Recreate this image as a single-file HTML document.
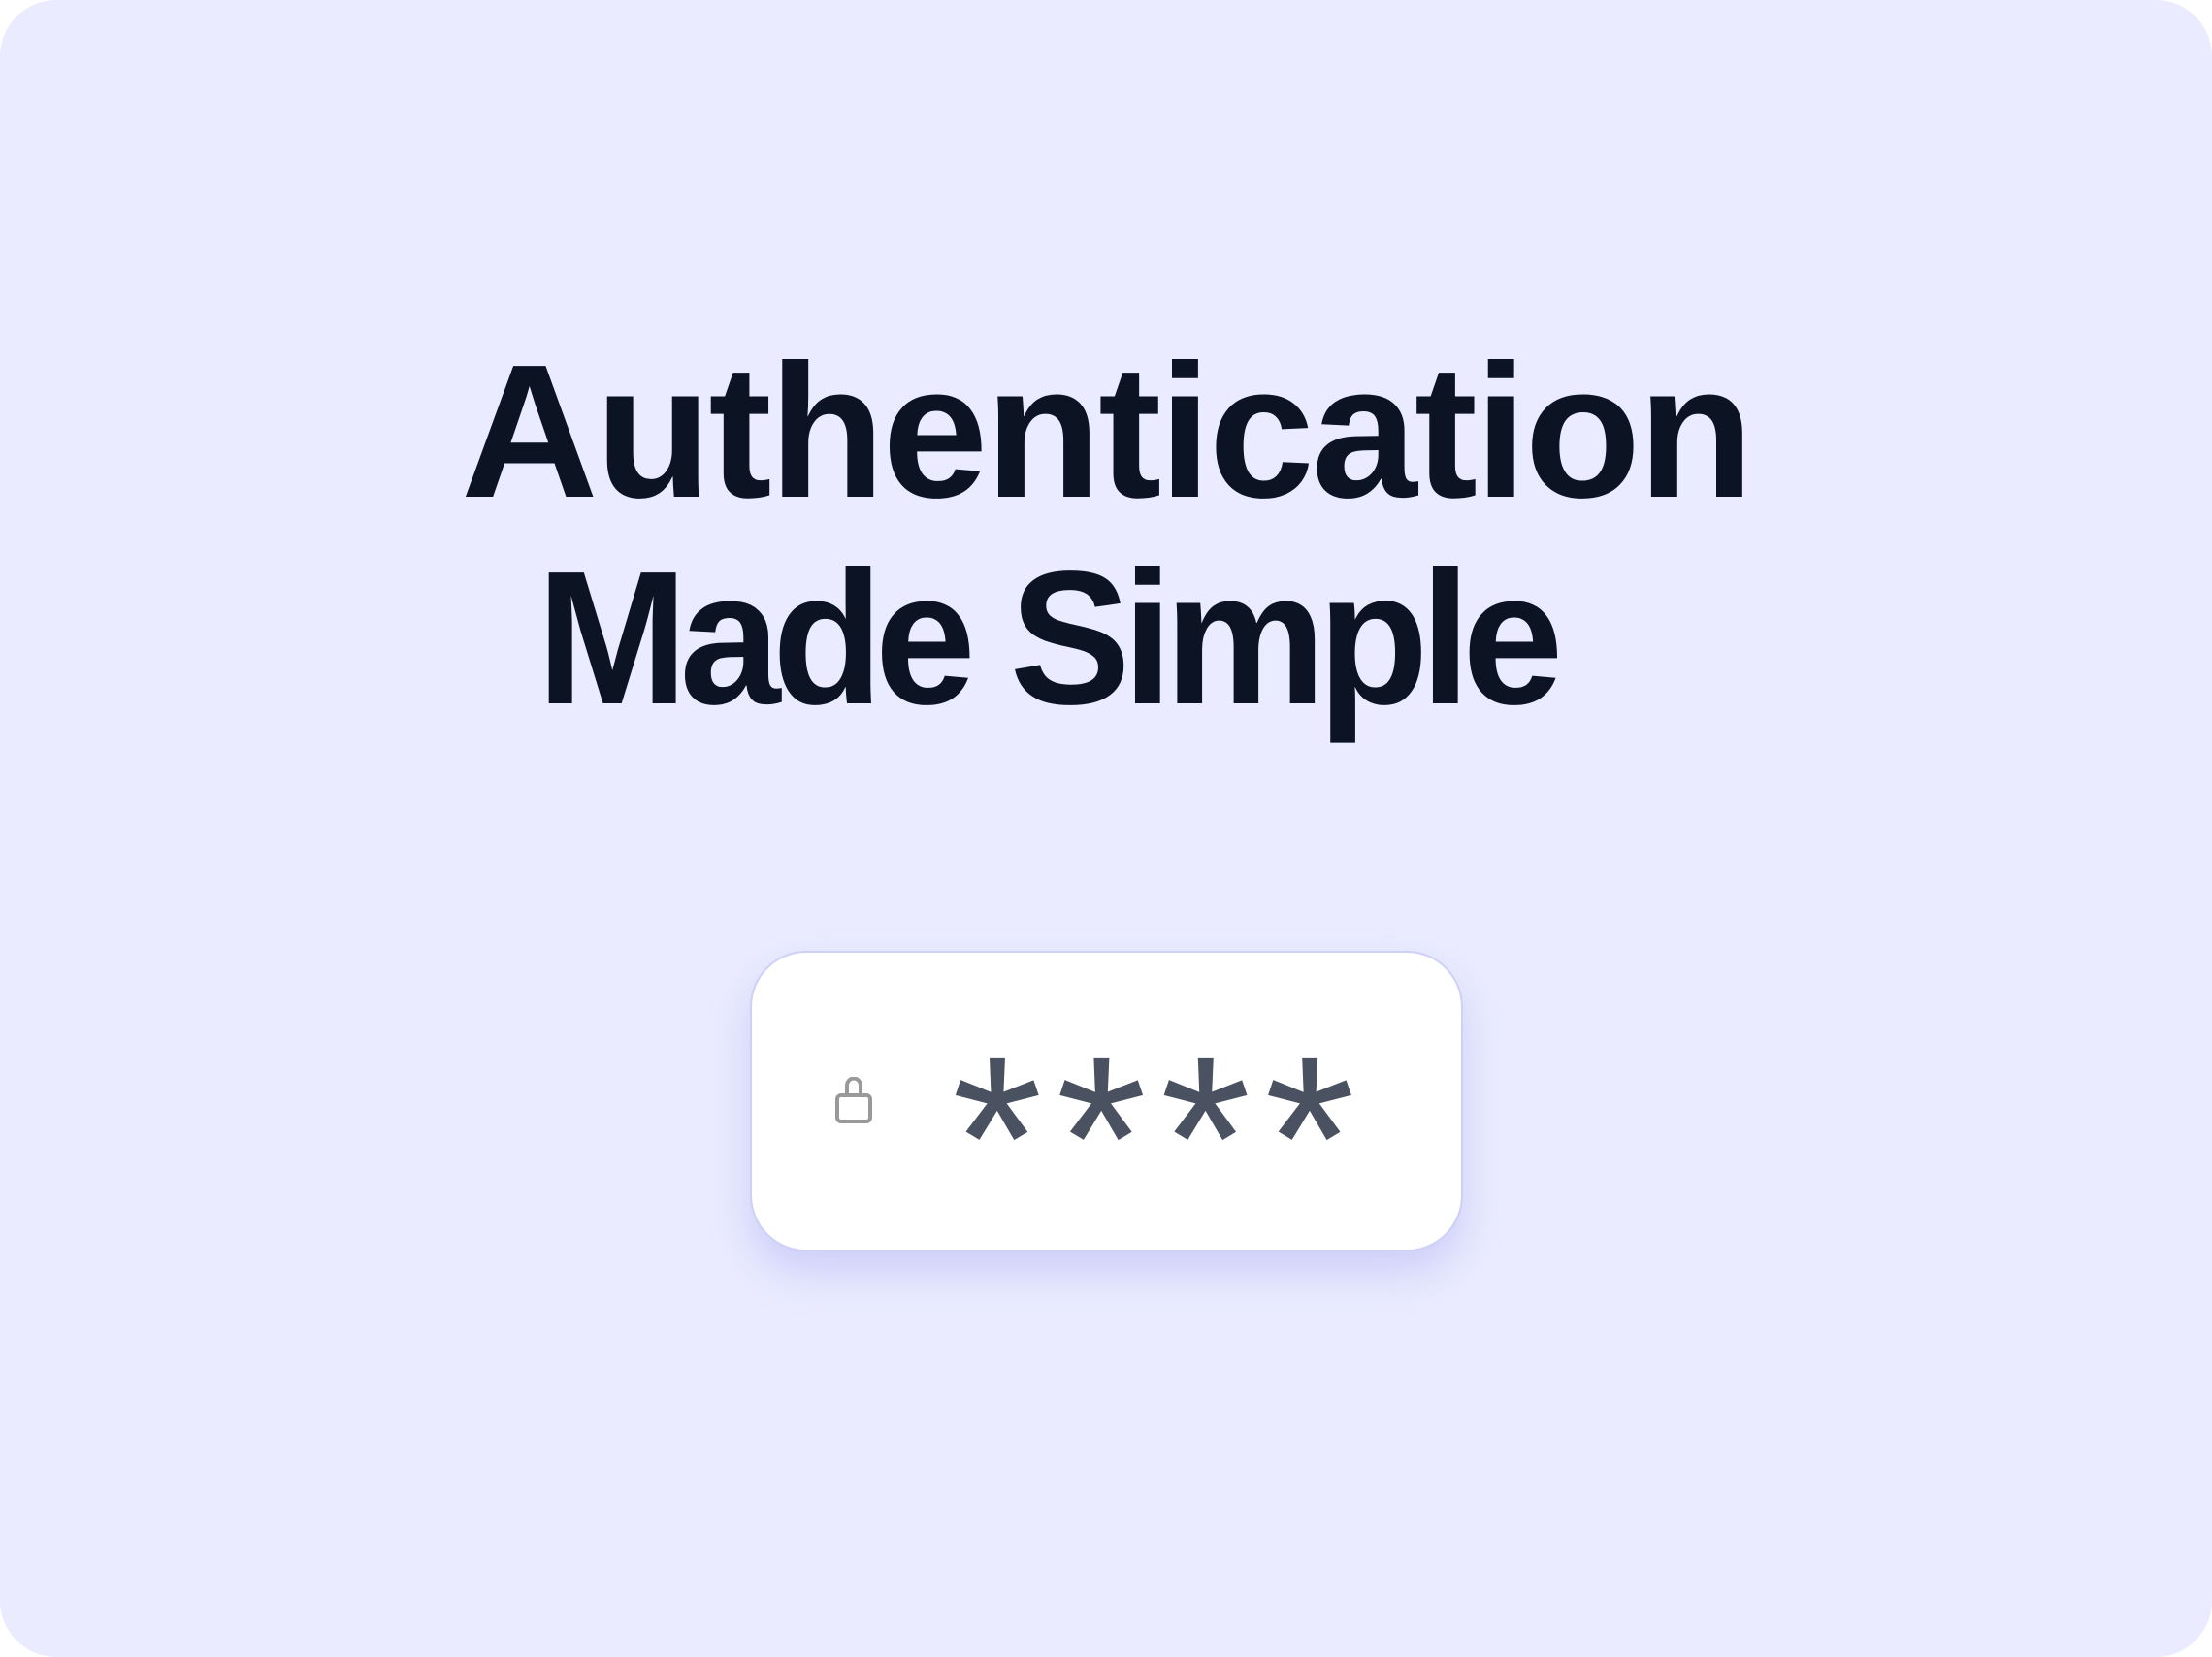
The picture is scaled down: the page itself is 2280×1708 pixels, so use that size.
<!DOCTYPE html>
<html><head><meta charset="utf-8"><style>
html,body{margin:0;padding:0;background:#fff;}
body{width:2280px;height:1708px;position:relative;overflow:hidden;}
.bg{position:absolute;left:0;top:0;width:2280px;height:1708px;background:#eaebfe;border-radius:58px;}
.t{position:absolute;font-family:"Liberation Sans",Arial,sans-serif;font-weight:bold;color:#0c1424;font-size:196px;line-height:213px;white-space:nowrap;text-align:center;}
.card{position:absolute;left:773px;top:980px;width:731px;height:306px;background:#fff;border:2px solid #cdd0f7;border-radius:58px;box-shadow:0 22px 40px rgba(170,175,245,0.45);}
.ast{position:absolute;left:981px;top:1053px;font-family:"Liberation Sans",Arial,sans-serif;font-size:240px;line-height:240px;color:#4a5160;letter-spacing:14px;white-space:nowrap;}
</style></head><body>
<div class="bg"></div>
<div class="t" style="left:340px;width:1600px;top:338px;letter-spacing:-3px;">Authentication</div>
<div class="t" style="left:278px;width:1600px;top:551px;letter-spacing:-9px;transform:scaleX(0.955);transform-origin:50% 50%;">Made Simple</div>
<div class="card"></div>
<svg style="position:absolute;left:861px;top:1110px" width="38" height="48" viewBox="0 0 38 48">
<path d="M12 19 V9 a7 7.5 0 0 1 14 0 V19" fill="none" stroke="#999" stroke-width="4"/>
<rect x="2" y="19" width="34" height="27" rx="4" fill="#fff" stroke="#999" stroke-width="4"/>
</svg>
<div class="ast">****</div>
</body></html>
